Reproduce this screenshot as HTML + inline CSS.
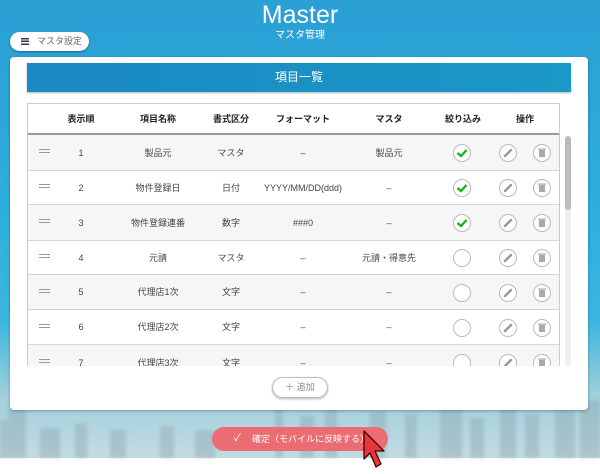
<!DOCTYPE html>
<html><head><meta charset="utf-8"><style>
*{margin:0;padding:0;box-sizing:border-box}
body{width:600px;height:474px;background:#fff;font-family:"Liberation Sans","Noto Sans CJK JP",sans-serif;position:relative;overflow:hidden}
.bg{position:absolute;left:0;top:0;width:600px;height:458px;background:linear-gradient(180deg,#2a9fd4 0%,#2eaede 45%,#3bb6e0 70%,#9fcfdc 86%,#c3dbe2 100%)}
.city{position:absolute;left:0;top:400px;width:600px;height:58px;filter:blur(1.5px)}
.title{position:absolute;top:0;left:0;width:600px;text-align:center;color:#fff;font-size:25px;line-height:30px}
.sub{position:absolute;top:26px;left:0;width:600px;text-align:center;color:#fff;font-size:10px}
.mbtn{position:absolute;left:10px;top:32px;width:79px;height:19px;background:#fff;border-radius:10px;box-shadow:0 1px 2px rgba(0,0,0,.4);font-size:9px;color:#666;line-height:19px;padding-left:27px}
.mbtn i{position:absolute;left:11px;top:6px;width:8px;height:7px;background:linear-gradient(#335 0 1.5px,transparent 1.5px 2.75px,#335 2.75px 4.25px,transparent 4.25px 5.5px,#335 5.5px 7px)}
.card{position:absolute;left:10px;top:57px;width:578px;height:353px;background:#fff;border-radius:4px;box-shadow:0 1px 3px rgba(0,0,0,.3)}
.hbar{position:absolute;left:27px;top:63px;width:544px;height:29px;background:linear-gradient(90deg,#1a89c4,#1a98c6);color:#fff;text-align:center;line-height:29px;font-size:12px;box-shadow:0 1px 2px rgba(0,0,0,.3)}
.tbl{position:absolute;left:27px;top:103px;width:533px;height:263px;border:1px solid #ccc;border-bottom:none;overflow:hidden}
.row{position:absolute;left:0;width:533px;border-bottom:1px solid #d6d6d6;font-size:9px;color:#444}
.hd{top:0;height:31px;border-bottom:2px solid #999;font-weight:bold;color:#222}
.c{position:absolute;top:0;transform:translateX(-50%);white-space:nowrap}
.g{background:#f6f6f6}
.dr{position:absolute;left:11px;width:11px;height:4px;border-top:1.5px solid #999;border-bottom:1.5px solid #999}
.ck,.ed,.dl{position:absolute;width:18px;height:18px;border-radius:50%;border:1px solid #bbb;background:#fff}
.sb{position:absolute;left:565px;top:136px;width:6px;height:230px;background:#eee;border-radius:3px}
.sb i{position:absolute;left:0;top:0;width:6px;height:74px;background:#bbb;border-radius:3px}
.add{position:absolute;left:272px;top:377px;width:56px;height:21px;border-radius:11px;border:1px solid #bbb;background:#fff;box-shadow:0 1px 2px rgba(0,0,0,.3);font-size:9px;color:#888;text-align:center;line-height:19px}
.conf{position:absolute;left:212px;top:427px;width:176px;height:24px;border-radius:12px;background:#ec6c73;color:#fff;font-size:9px;line-height:24px;padding-left:40px}
</style></head><body>
<div class="bg"></div>
<svg class="city" viewBox="0 0 600 58"><g fill="#8aa4ae" opacity=".4">
<rect x="0" y="20" width="12" height="38"/><rect x="8" y="8" width="18" height="50"/><rect x="40" y="28" width="20" height="30"/><rect x="75" y="24" width="12" height="34"/><rect x="110" y="30" width="16" height="28"/><rect x="160" y="26" width="14" height="32"/><rect x="195" y="30" width="20" height="28"/><rect x="275" y="6" width="8" height="52"/><rect x="300" y="16" width="14" height="42"/><rect x="325" y="10" width="12" height="48"/><rect x="370" y="12" width="16" height="46"/><rect x="405" y="14" width="12" height="44"/><rect x="440" y="6" width="22" height="52"/><rect x="470" y="18" width="14" height="40"/><rect x="500" y="4" width="16" height="54"/><rect x="525" y="14" width="14" height="44"/><rect x="555" y="10" width="20" height="48"/><rect x="580" y="0" width="20" height="58"/></g></svg>
<div class="title">Master</div>
<div class="sub">マスタ管理</div>
<div class="mbtn"><i></i>マスタ設定</div>
<div class="card"></div>
<div class="hbar">項目一覧</div>
<div class="tbl">
<div class="row hd" style="line-height:31px"><span class="c" style="left:53px">表示順</span><span class="c" style="left:130px">項目名称</span><span class="c" style="left:203px">書式区分</span><span class="c" style="left:275px">フォーマット</span><span class="c" style="left:361px">マスタ</span><span class="c" style="left:435px">絞り込み</span><span class="c" style="left:497px">操作</span></div>
</div>
<div class="sb"><i></i></div>
<div class="add">＋ 追加</div>
<div class="conf"><span style="position:absolute;left:22px;font-size:10px">✓</span>確定（モバイルに反映する）</div>
<svg style="position:absolute;left:362px;top:429px" width="26" height="45" viewBox="0 0 26 45"><path d="M2 2 L2 30 L8 24 L14 38 L19 35 L13 22 L22 22 Z" fill="#e8343b" stroke="#400" stroke-width="1.3" stroke-linejoin="round"/></svg>
<script>
var rows=[["1","製品元","マスタ","–","製品元",1],["2","物件登録日","日付","YYYY/MM/DD(ddd)","–",1],["3","物件登録連番","数字","###0","–",1],["4","元請","マスタ","–","元請・得意先",0],["5","代理店1次","文字","–","–",0],["6","代理店2次","文字","–","–",0],["7","代理店3次","文字","–","–",0]];
var tops=[31,67,101,137,171,206,241],h="";
rows.forEach(function(r,i){var t=tops[i],hh=(i<6?tops[i+1]-t:36);
h+='<div class="row'+(i%2==0?' g':'')+'" style="top:'+t+'px;height:'+hh+'px;line-height:'+hh+'px"><i class="dr" style="top:'+(hh/2-4)+'px"></i><span class="c" style="left:53px">'+r[0]+'</span><span class="c" style="left:130px">'+r[1]+'</span><span class="c" style="left:203px">'+r[2]+'</span><span class="c" style="left:275px">'+r[3]+'</span><span class="c" style="left:361px">'+r[4]+'</span>'+
'<span class="ck" style="left:425px;top:'+(hh/2-9)+'px">'+(r[5]?'<svg width="16" height="16" viewBox="0 0 16 16" style="position:absolute;left:0;top:0"><path d="M3.5 8 L7 11 L12.5 5" fill="none" stroke="#1db01d" stroke-width="2.4"/></svg>':'')+'</span>'+
'<span class="ed" style="left:471px;top:'+(hh/2-9)+'px"><svg width="16" height="16" viewBox="0 0 16 16" style="position:absolute;left:0;top:0"><path d="M5 11 L11 5" stroke="#999" stroke-width="2.4" stroke-linecap="round"/></svg></span>'+
'<span class="dl" style="left:505px;top:'+(hh/2-9)+'px"><svg width="16" height="16" viewBox="0 0 16 16" style="position:absolute;left:0;top:0"><rect x="5" y="5" width="6" height="7" fill="#aaa"/><rect x="4" y="3.5" width="8" height="1.2" fill="#aaa"/></svg></span></div>';});
document.querySelector('.tbl').insertAdjacentHTML('beforeend',h);
</script>
</body></html>
